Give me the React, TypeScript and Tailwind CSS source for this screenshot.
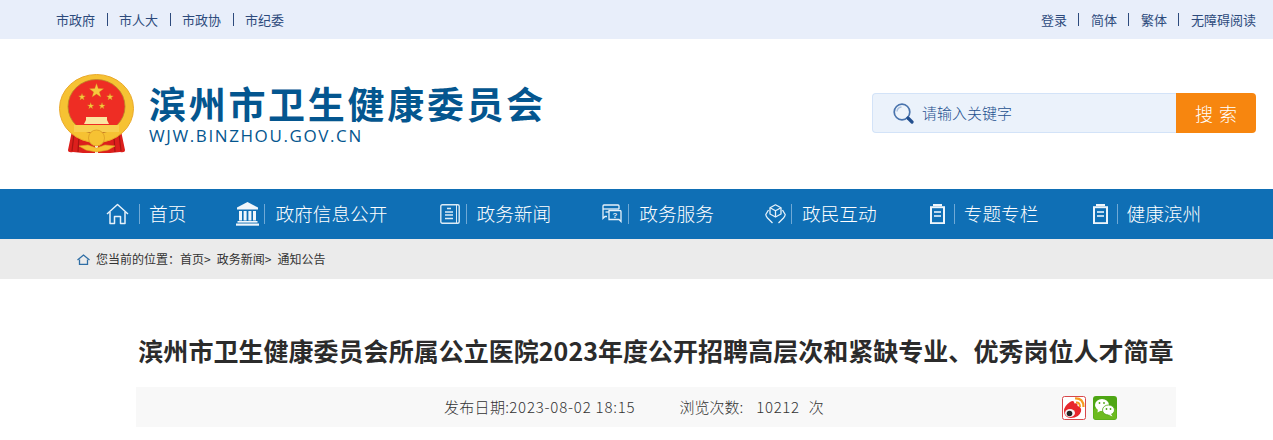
import React from "react";

const cjk = { fontFamily: '"Noto Sans CJK SC", "Liberation Sans", sans-serif' };

function Star({ x, y, r, rot = 0 }: { x: number; y: number; r: number; rot?: number }) {
  const pts: string[] = [];
  for (let i = 0; i < 10; i++) {
    const a = (-90 + rot + i * 36) * (Math.PI / 180);
    const rr = i % 2 === 0 ? r : r * 0.4;
    pts.push(`${(x + rr * Math.cos(a)).toFixed(2)},${(y + rr * Math.sin(a)).toFixed(2)}`);
  }
  return <polygon points={pts.join(" ")} fill="#f7c93e" stroke="#c98f1c" strokeWidth="0.3" />;
}

function Emblem() {
  return (
    <svg width="75" height="81" viewBox="0 0 75 81" className="shrink-0">
      <path d="M14 52 L9 76 Q9 79 14 78 L24 79 L36 79 L36 60Z" fill="#dc1f1c" />
      <path d="M61 52 L66 76 Q66 79 61 78 L51 79 L39 79 L39 60Z" fill="#dc1f1c" />
      <path d="M15 60 L13 77 M20 62 L19 78 M60 60 L62 77 M55 62 L56 78" stroke="#a81512" strokeWidth="1.2" />
      <ellipse cx="37.5" cy="34.5" rx="37" ry="34" fill="#f6c233" stroke="#eaa92a" strokeWidth="1" />
      <ellipse cx="37.5" cy="32.5" rx="28.5" ry="27" fill="#ee2d24" stroke="#b6862a" strokeWidth="0.8" />
      <Star x={37.5} y={17} r={7.5} />
      <Star x={23} y={23} r={3.6} />
      <Star x={51} y={23} r={3.6} />
      <Star x={31.7} y={32} r={3.4} />
      <Star x={43} y={32} r={3.4} />
      <path d="M27 43 L48 43 L48 46 L50 50 L25 50 L27 46Z" fill="#fbe6a0" />
      <path d="M15 51 L60 51 L60 58 L15 58Z" fill="#f8cf50" />
      <circle cx="37.5" cy="64" r="8" fill="#f6c233" stroke="#d99a24" strokeWidth="0.8" />
      <path d="M20 72 L29 71 L37.5 74 L46 71 L56 72 L49 76 L37.5 78 L27 76Z" fill="#f6c233" stroke="#dba626" strokeWidth="0.6" />
    </svg>
  );
}

function SearchIcon() {
  return (
    <svg width="21" height="21" viewBox="0 0 21 21" className="shrink-0">
      <circle cx="9" cy="9" r="7.8" fill="#eef4fb" stroke="#4a74ad" strokeWidth="1.7" />
      <path d="M4 8.5 A5 5 0 0 1 8.5 4" fill="none" stroke="#a9c0de" strokeWidth="1.4" />
      <path d="M15 15 L19 19" stroke="#234f8e" strokeWidth="3.2" strokeLinecap="round" />
    </svg>
  );
}

const navIcons: Record<string, React.ReactNode> = {
  home: (
    <svg width="23" height="22" viewBox="0 0 23 22" fill="none" stroke="#e6f1fa" strokeWidth="1.5">
      <path d="M1 11 L11.5 1.5 L22 11" strokeLinejoin="round" />
      <path d="M4 9 V20.5 H8.5 V13.5 H14.5 V20.5 H19 V9" strokeLinejoin="round" />
    </svg>
  ),
  gov: (
    <svg width="23" height="24" viewBox="0 0 23 24" fill="#f0f6fb">
      <path d="M11.5 0 L22 5.5 V7.5 H1 V5.5Z" />
      <rect x="3" y="9" width="3" height="9.5" />
      <rect x="7.6" y="9" width="3" height="9.5" />
      <rect x="12.4" y="9" width="3" height="9.5" />
      <rect x="17" y="9" width="3" height="9.5" />
      <rect x="1.5" y="19" width="20" height="1.6" />
      <rect x="0" y="21.5" width="23" height="2.2" />
    </svg>
  ),
  news: (
    <svg width="20" height="20" viewBox="0 0 20 20" fill="none" stroke="#dcebf6">
      <rect x="0.8" y="0.8" width="18.4" height="18.4" rx="1.5" strokeWidth="1.4" />
      <path d="M16.5 1 V19" strokeWidth="1" />
      <path d="M7 4.5 H11 M5 8 H13 M5 11 H13 M5 14.5 H13" strokeWidth="1.5" />
    </svg>
  ),
  service: (
    <svg width="20" height="19" viewBox="0 0 20 19" fill="none" stroke="#e6f1fa" strokeWidth="1.3">
      <path d="M5 12.5 H3 L1 14.5 V2 Q1 1 2 1 H16 Q17 1 17 2 V5" />
      <path d="M1 5 H17" />
      <path d="M3.5 8 H7" />
      <path d="M7 6.5 H18 Q19 6.5 19 7.5 V17.5 L17 15.5 H7Z" />
      <text x="13" y="14" fontSize="8" fontWeight="700" fill="#e6f1fa" stroke="none" textAnchor="middle" fontFamily="Liberation Sans">?</text>
    </svg>
  ),
  interact: (
    <svg width="21" height="20" viewBox="0 0 21 20" fill="none" stroke="#e6f1fa" strokeWidth="1.3" strokeLinejoin="round">
      <path d="M10.5 0.8 L16 3.8 V10 L10.5 13 L5 10 V3.8Z" />
      <path d="M5 3.8 L10.5 6.8 L16 3.8 M10.5 6.8 V13" />
      <path d="M3.5 6 L0.8 10.5 Q0.8 12 2.5 14 L7.5 19 M17.5 6 L20.2 10.5 Q20.2 12 18.5 14 L13.5 19" />
    </svg>
  ),
  col: (
    <svg width="15" height="20" viewBox="0 0 15 20">
      <rect x="3" y="0" width="9" height="2" fill="#eef5fb" />
      <rect x="1" y="3.2" width="13" height="16" fill="none" stroke="#eef5fb" strokeWidth="2" />
      <rect x="4" y="7" width="7" height="2" fill="#bcd8ee" />
      <rect x="4" y="11" width="7" height="2" fill="#bcd8ee" />
    </svg>
  ),
};

const navItems = [
  { icon: "home", label: "首页", box: "w-[33px]", gap: "ml-[9px]", ml: "ml-0" },
  { icon: "gov", label: "政府信息公开", box: "w-[28px]", gap: "ml-[10px]", ml: "ml-[50px]" },
  { icon: "news", label: "政务新闻", box: "w-[26px]", gap: "ml-[10px]", ml: "ml-[52px]" },
  { icon: "service", label: "政务服务", box: "w-[26px]", gap: "ml-[10px]", ml: "ml-[51px]" },
  { icon: "interact", label: "政民互动", box: "w-[26px]", gap: "ml-[10px]", ml: "ml-[51px]" },
  { icon: "col", label: "专题专栏", box: "w-[24px]", gap: "ml-[9px]", ml: "ml-[53px]" },
  { icon: "col", label: "健康滨州", box: "w-[24px]", gap: "ml-[9px]", ml: "ml-[54px]" },
];

function TopLinks({ items }: { items: string[] }) {
  return (
    <div className="flex items-center text-[13px] text-[#2d4a7c]">
      {items.map((t, i) => (
        <React.Fragment key={t}>
          {i > 0 && <span className="h-[13px] w-px bg-[#2d4a7c] mx-[11.5px]" />}
          <a>{t}</a>
        </React.Fragment>
      ))}
    </div>
  );
}

export default function App() {
  return (
    <div className="w-[1273px] h-[440px] overflow-hidden bg-white" style={cjk}>
      <div className="h-[39px] bg-[#e8eefa] flex items-center justify-between pl-[56px] pr-[17px]">
        <TopLinks items={["市政府", "市人大", "市政协", "市纪委"]} />
        <TopLinks items={["登录", "简体", "繁体", "无障碍阅读"]} />
      </div>

      <div className="h-[150px] flex items-center justify-between pl-[59px] pr-[17px]">
        <div className="flex items-center gap-[15px]">
          <Emblem />
          <div className="flex flex-col mb-[3px]">
            <div className="text-[37px] leading-[46px] font-bold text-[#04568f] tracking-[2.7px] whitespace-nowrap">滨州市卫生健康委员会</div>
            <div className="text-[17px] leading-[20px] text-[#04568f] tracking-[1.6px] whitespace-nowrap" style={{ fontFamily: '"Open Sans", sans-serif' }}>WJW.BINZHOU.GOV.CN</div>
          </div>
        </div>
        <div className="flex w-[384px] h-[40px] mb-[2px]">
          <div className="flex-1 flex items-center gap-[8px] pl-[20px] bg-[#ebf2fb] border border-r-0 border-[#d3e3f8] rounded-l-[4px] text-[15px] font-light text-[#23508f]">
            <SearchIcon />
            <span>请输入关键字</span>
          </div>
          <button className="w-[80px] bg-[#f7860f] text-white text-[18px] font-light tracking-[6px] pl-[6px] rounded-r-[4px]">搜索</button>
        </div>
      </div>

      <div className="h-[50px] bg-[#0f6fb5] flex items-center pl-[106px] text-white text-[18.7px] font-light">
        {navItems.map((n, i) => (
          <div key={i} className={`flex items-center ${n.ml}`}>
            <span className={`flex ${n.box}`}>{navIcons[n.icon]}</span>
            <span className="w-px h-[20px] bg-[#6fa9d6]" />
            <span className={`whitespace-nowrap mb-[2px] ${n.gap}`}>{n.label}</span>
          </div>
        ))}
      </div>

      <div className="h-[40px] bg-[#ebebeb] flex items-center pl-[77px] text-[12px] text-[#333]">
        <svg width="13" height="11" viewBox="0 0 13 11" fill="none" stroke="#2f6ea5" strokeWidth="1.3" className="mr-[6px]">
          <path d="M0.5 6 L6.5 1 L12.5 6" />
          <path d="M2.5 5.5 V10.5 H10.5 V5.5" />
        </svg>
        <span>您当前的位置：</span>
        <span>首页</span>
        <span className="mr-[6px]">&gt;</span>
        <span>政务新闻</span>
        <span className="mr-[6px]">&gt;</span>
        <span>通知公告</span>
      </div>

      <div className="w-[1040px] ml-[136px] mt-[51px]">
        <h1 className="text-[25px] leading-[40px] font-bold text-[#2b2b2b] text-center whitespace-nowrap tracking-[0.03px]">
          滨州市卫生健康委员会所属公立医院2023年度公开招聘高层次和紧缺专业、优秀岗位人才简章
        </h1>
        <div className="relative mt-[17px] h-[40px] bg-[#f8f8f8] flex items-center pl-[308px] text-[15px] font-light text-[#333]">
          <span className="tracking-[0.3px]">发布日期:</span>
          <span className="tracking-[0.8px]">2023-08-02 18:15</span>
          <span className="ml-[44px]">浏览次数:</span>
          <span className="ml-[13px] tracking-[0.7px]">10212</span>
          <span className="ml-[9px]">次</span>
          <div className="absolute left-[926px] top-[9px] flex gap-[7px]">
            <svg width="24" height="24" viewBox="0 0 24 24">
              <rect x="0.5" y="0.5" width="23" height="23" rx="2" fill="#fff" stroke="#d8474a" />
              <path d="M2 15 Q2 10 8 6 Q12 3.5 12.5 7.5 Q16 6.5 15.5 10 Q20 11 19 15.5 Q17 22 9 22 Q2 21.5 2 15Z" fill="#e8262c" />
              <ellipse cx="8" cy="17" rx="5" ry="4" fill="#f4f4f4" />
              <circle cx="7.5" cy="17.5" r="2.8" fill="#222" />
              <path d="M13 2.5 Q21.5 2 21.5 11" fill="none" stroke="#f59a1f" strokeWidth="2.2" />
              <path d="M14 6.5 Q18 6 18 11" fill="none" stroke="#f59a1f" strokeWidth="2" />
            </svg>
            <svg width="24" height="24" viewBox="0 0 24 24">
              <rect x="0" y="0" width="24" height="24" rx="3" fill="#4ea614" />
              <rect x="0.5" y="12" width="23" height="11.5" rx="3" fill="#6dbb1f" />
              <ellipse cx="9" cy="9" rx="7" ry="6" fill="#fff" />
              <path d="M5 13 L4.5 16.5 L9 14Z" fill="#fff" />
              <ellipse cx="15.5" cy="14" rx="6" ry="5" fill="#fff" stroke="#4ea614" strokeWidth="0.8" />
              <path d="M18 18 L19.5 20.5 L15 18.5Z" fill="#fff" />
              <circle cx="13.5" cy="13" r="0.9" fill="#4ea614" />
              <circle cx="17.5" cy="13" r="0.9" fill="#4ea614" />
              <circle cx="6.5" cy="7" r="0.9" fill="#4ea614" />
              <circle cx="11" cy="7" r="0.9" fill="#4ea614" />
            </svg>
          </div>
        </div>
      </div>
    </div>
  );
}
